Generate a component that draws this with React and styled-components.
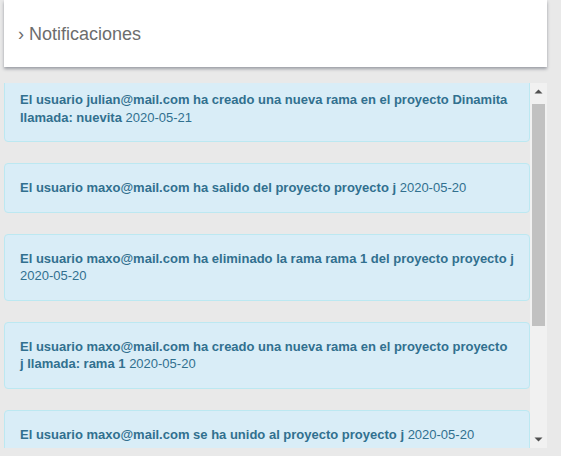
import React, { useEffect, useRef } from 'react'
import styled, { createGlobalStyle } from 'styled-components'

const GlobalStyle = createGlobalStyle`
    html, body {
        margin: 0;
        padding: 0;
        background-color: #e9e9e9;
        font-family: "Liberation Sans", Arial, sans-serif;
    }
`

const notifications = [
    { text: 'El usuario julian@mail.com ha creado una nueva rama en el proyecto Dinamita llamada: nuevita', date: '2020-05-21' },
    { text: 'El usuario maxo@mail.com ha salido del proyecto proyecto j', date: '2020-05-20' },
    { text: 'El usuario maxo@mail.com ha eliminado la rama rama 1 del proyecto proyecto j', date: '2020-05-20' },
    { text: 'El usuario maxo@mail.com ha creado una nueva rama en el proyecto proyecto j llamada: rama 1', date: '2020-05-20' },
    { text: 'El usuario maxo@mail.com se ha unido al proyecto proyecto j', date: '2020-05-20' },
    { text: 'El usuario maxo@mail.com ha creado el proyecto proyecto j', date: '2020-05-20' },
    { text: 'El usuario julian@mail.com ha creado el proyecto Dinamita', date: '2020-05-19' },
]

const Arrow = ({ down }) =>
    <svg width="17" height="17" viewBox="0 0 17 17">
        <path d={down ? 'M4.5 6.5 L8.5 10.5 L12.5 6.5 Z' : 'M4.5 10.5 L8.5 6.5 L12.5 10.5 Z'} fill="#505050" />
    </svg>

const App = () => {
    const listRef = useRef(null)

    useEffect(() => {
        if (listRef.current) listRef.current.scrollTop = 8
    }, [])

    return (
        <Page>
            <GlobalStyle />
            <Header>
                <HeaderTitle>› Notificaciones</HeaderTitle>
            </Header>
            <ListFrame>
                <Viewport ref={listRef}>
                    {notifications.map((n, i) =>
                        <Alert key={i}>
                            <strong>{n.text}</strong> {n.date}
                        </Alert>
                    )}
                </Viewport>
                <ScrollBar>
                    <ArrowButton><Arrow /></ArrowButton>
                    <Track>
                        <Thumb />
                    </Track>
                    <ArrowButton><Arrow down /></ArrowButton>
                </ScrollBar>
            </ListFrame>
        </Page>
    )
}

export default App

const Page = styled.div`
    width: 543px;
    margin-left: 4px;
    display: flex;
    flex-direction: column;
    gap: 16px;
`

const Header = styled.div`
    background-color: white;
    height: 67px;
    display: flex;
    align-items: center;
    padding-left: 14px;
    box-shadow: 0 2px 3px rgba(60, 64, 80, 0.45);
`

const HeaderTitle = styled.div`
    font-size: 18px;
    color: #6d6d6d;
    padding-top: 2px;
`

const ListFrame = styled.div`
    height: 365px;
    display: flex;
`

const Viewport = styled.div`
    flex: 1;
    overflow-y: auto;
    scrollbar-width: none;
    &::-webkit-scrollbar {
        display: none;
    }
`

const ScrollBar = styled.div`
    width: 17px;
    flex-shrink: 0;
    background-color: #f1f1f1;
    display: flex;
    flex-direction: column;
`

const ArrowButton = styled.div`
    height: 17px;
    display: flex;
    align-items: center;
    justify-content: center;
`

const Track = styled.div`
    flex: 1;
    padding: 4px 2px 0 2px;
`

const Thumb = styled.div`
    height: 222px;
    background-color: #c1c1c1;
`

const Alert = styled.div`
    background-color: #d9edf7;
    border: 1px solid #bce8f1;
    border-radius: 4px;
    color: #31708f;
    padding: 15px;
    margin-bottom: 21px;
    font-size: 13px;
    line-height: 17.5px;

    strong {
        font-weight: bold;
    }
`
